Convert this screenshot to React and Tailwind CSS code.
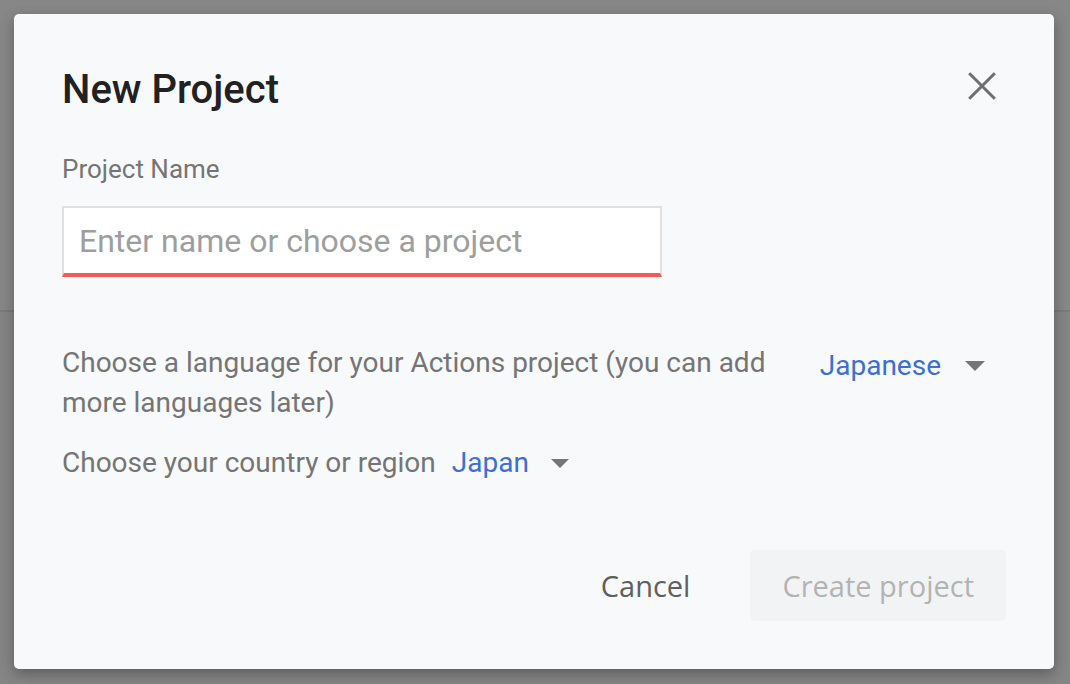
import React from "react";

function Caret({ className }) {
  return (
    <svg viewBox="0 0 20 10" className={className} aria-hidden="true">
      <path d="M0 0 L20 0 L10 10 Z" fill="#757575" />
    </svg>
  );
}

function CloseIcon() {
  return (
    <svg viewBox="0 0 24 24" className="h-12 w-12" aria-hidden="true">
      <path d="M5.6 5.6 L18.4 18.4 M18.4 5.6 L5.6 18.4" stroke="#6f6f6f" strokeWidth="1.5" fill="none" />
    </svg>
  );
}

export default function App() {
  const [name, setName] = React.useState("");

  return (
    <div className="relative h-[684px] w-full overflow-hidden bg-[#858585] font-['Roboto',sans-serif]">
      {/* page behind the overlay */}
      <div className="h-[312px] border-b-2 border-[#7a7a7a] bg-[#878787]" />

      <div className="absolute left-[14px] top-[14px] flex h-[655px] w-[1040px] flex-col rounded-[5px] bg-[#f8f9fa] px-12 pt-12 shadow-[0_5px_14px_rgba(0,0,0,0.3)]">
        <div className="flex items-start justify-between">
          <h2 className="mt-1 text-[40px] font-medium leading-[48px] text-[#212121]">New Project</h2>
          <button type="button" className="flex h-12 w-12 items-center justify-center">
            <CloseIcon />
          </button>
        </div>

        <label className="mt-[39px] text-[26px] leading-[32px] text-[#757575]">Project Name</label>
        <div className="mt-[21px] flex h-[71px] w-[600px] items-center border-2 border-b-4 border-[#e0e0e0] border-b-[#ee5d56] bg-white">
          <input
            value={name}
            onChange={(e) => setName(e.target.value)}
            placeholder="Enter name or choose a project"
            className="h-full w-full bg-transparent pl-[15px] text-[32px] text-[#212121] outline-none placeholder:text-[#9e9e9e]"
          />
        </div>

        <div className="mt-[66px] flex items-start justify-between">
          <p className="w-[730px] text-[28px] leading-[40px] text-[#757575]">
            Choose a language for your Actions project (you can add more languages later)
          </p>
          <div className="mt-[3px] flex items-center pr-[21px]">
            <span className="text-[28px] leading-[40px] text-[#3b6fd7]">Japanese</span>
            <Caret className="ml-6 h-[10px] w-[20px]" />
          </div>
        </div>

        <div className="mt-5 flex items-center text-[28px] leading-[40px]">
          <span className="text-[#757575]">Choose your country or region</span>
          <span className="ml-4 text-[#3b6fd7]">Japan</span>
          <Caret className="ml-[22px] h-[9px] w-[18px]" />
        </div>

        <div className="mt-[67px] flex items-center justify-end gap-7 font-['Open_Sans',sans-serif] text-[29px] font-medium">
          <button type="button" className="h-[71px] rounded px-8 text-[#5f5f5f]">
            Cancel
          </button>
          <button type="button" disabled className="h-[71px] rounded-[5px] bg-[#f2f3f4] px-8 text-[#b3b3b3]">
            Create project
          </button>
        </div>
      </div>
    </div>
  );
}
